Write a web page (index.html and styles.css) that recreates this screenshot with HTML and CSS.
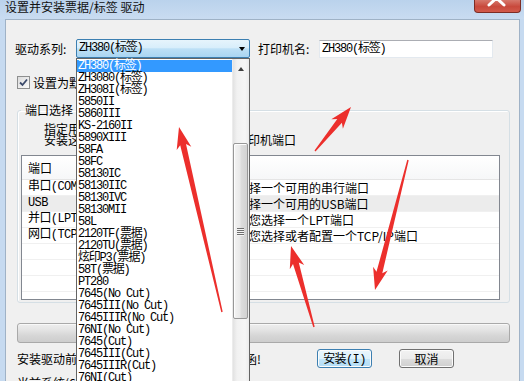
FILE: index.html
```html
<!DOCTYPE html>
<html lang="zh-CN">
<head>
<meta charset="UTF-8">
<meta name="viewport" content="width=device-width, initial-scale=1.0">
<title>设置并安装票据/标签 驱动</title>
<link rel="stylesheet" href="styles.css">
</head>
<body>

<div class="titlebar">
  <span class="title">设置并安装票据/标签 驱动</span>
  <span class="close-btn">
    <svg width="47" height="13" viewBox="0 0 47 13">
      <path d="M15 -8 L30 6 M30 -8 L15 6" stroke="#fff" stroke-width="3" stroke-linecap="round"/>
    </svg>
  </span>
</div>

<div class="client">
  <div class="row-top">
    <label class="lbl lbl-series">驱动系列:</label>
    <div class="combo">
      <span class="mono">ZH380(标签)</span>
      <span class="combo-arrow"></span>
    </div>
    <label class="lbl lbl-name">打印机名:</label>
    <div class="textbox mono">ZH380(标签)</div>
  </div>

  <div class="row-check">
    <span class="checkbox">
      <svg width="11" height="11" viewBox="0 0 11 11">
        <path d="M2 5.5 L4.5 8 L9 2.5" fill="none" stroke="#3b4a6b" stroke-width="1.8"/>
      </svg>
    </span>
    <span class="check-label">设置为默认打印机</span>
  </div>

  <fieldset class="port-group">
    <legend>端口选择</legend>
    <div class="desc">
      指定用于连接打印机的端口<br>
      安装这个驱动程序时请选择所连接的打印机端口
    </div>
    <div class="listview">
      <div class="lv-head"><span>端口</span><span>描述</span></div>
      <div class="lv-row"><span class="mono-mix">串口(COM)</span><span>请选择一个可用的串行端口</span></div>
      <div class="lv-row sel"><span class="mono-mix">USB</span><span>请选择一个可用的USB端口</span></div>
      <div class="lv-row"><span class="mono-mix">并口(LPT)</span><span>允许您选择一个LPT端口</span></div>
      <div class="lv-row"><span class="mono-mix">网口(TCP/IP)</span><span>允许您选择或者配置一个TCP/IP端口</span></div>
      <div class="lv-row"></div>
      <div class="lv-row"></div>
      <div class="lv-row"></div>
      <div class="lv-row"></div>
    </div>
  </fieldset>

  <div class="progress"></div>

  <div class="row-bottom">
    <div class="note">
      安装驱动前请确认打印机已连接并打开电源函!<br>
      当前系统(64位)
    </div>
    <button class="btn btn-default"><span class="mono-mix">安装(I)</span></button>
    <button class="btn btn-cancel">取消</button>
  </div>
</div>

<!-- opened combobox list -->
<div class="dropdown">
  <ul class="dd-list mono">
    <li class="active">ZH380(标签)</li>
    <li>ZH3080(标签)</li>
    <li>ZH308I(标签)</li>
    <li>5850II</li>
    <li>5860III</li>
    <li>KS-2160II</li>
    <li>5890XIII</li>
    <li>58FA</li>
    <li>58FC</li>
    <li>58130IC</li>
    <li>58130IIC</li>
    <li>58130IVC</li>
    <li>58130MII</li>
    <li>58L</li>
    <li>2120TF(票据)</li>
    <li>2120TU(票据)</li>
    <li>炫印P3(票据)</li>
    <li>58T(票据)</li>
    <li>PT280</li>
    <li>7645(No Cut)</li>
    <li>7645III(No Cut)</li>
    <li>7645IIIR(No Cut)</li>
    <li>76NI(No Cut)</li>
    <li>7645(Cut)</li>
    <li>7645III(Cut)</li>
    <li>7645IIIR(Cut)</li>
    <li>76NI(Cut)</li>
  </ul>
  <div class="dd-scroll">
    <div class="sb-up"><span class="sb-arrow"></span></div>
    <div class="sb-thumb">
      <span class="grip"></span>
      <span class="grip"></span>
      <span class="grip"></span>
      <span class="grip"></span>
    </div>
  </div>
</div>

<!-- red annotation arrows -->
<svg class="marks" width="524" height="381" viewBox="0 0 524 381">
  <g fill="#ec2f2c">
    <polygon points="222.7,311.8 186.0,143.9 191.3,146.7 179,127 176.7,150.1 180.2,145.2 221.3,312.2"/>
    <polygon points="315.5,151.4 341.9,122.8 342.9,128.8 351,107 331.3,119.3 337.3,119.0 314.5,150.6"/>
    <polygon points="407.3,159.8 376.5,271.8 373.1,266.8 375,290 387.7,270.5 382.3,273.3 408.7,160.2"/>
    <polygon points="314.7,326.8 298.8,262.5 304.2,265.1 291,246 289.8,269.2 293.0,264.1 313.3,327.2"/>
  </g>
</svg>

</body>
</html>
```

FILE: styles.css
```css
* {
  box-sizing: border-box;
}

body {
  margin: 0;
  width: 524px;
  height: 381px;
  overflow: hidden;
  position: relative;
  background: #c6daf0;
  font-family: "Noto Sans CJK SC", "Liberation Sans", sans-serif;
  font-size: 12px;
  color: #000;
}

.mono {
  font-family: "Liberation Mono", "Noto Sans CJK SC", monospace;
  letter-spacing: -1.2px;
}

.mono-mix {
  font-family: "Liberation Mono", "Noto Sans CJK SC", monospace;
  letter-spacing: -0.6px;
}

/* title bar */
.titlebar {
  height: 19px;
  display: flex;
  justify-content: space-between;
  align-items: flex-start;
  background: linear-gradient(#bad2ec, #c9dcf1);
}

.title {
  margin-left: 5px;
  line-height: 14px;
  color: #111;
}

.close-btn {
  width: 47px;
  height: 13px;
  margin-right: 3px;
  border: 1px solid #7d2c24;
  border-top: none;
  border-radius: 0 0 4px 4px;
  background: linear-gradient(#d6786c, #c8493c 55%, #d25a4b);
  overflow: hidden;
}

.close-btn svg {
  display: block;
  margin: -1px 0 0 -1px;
}

/* client area */
.client {
  margin: 0 4px 0 5px;
  height: 362px;
  border: 1px solid #9fb2c6;
  border-bottom: none;
  background: #f0f0f0;
}

.row-top {
  display: flex;
  align-items: center;
  height: 19px;
  margin-top: 19px;
  padding-left: 9px;
}

.lbl {
  line-height: 19px;
  white-space: nowrap;
}

.lbl-series {
  width: 61px;
}

.lbl-name {
  width: 61px;
  margin-left: 8px;
}

.combo {
  width: 174px;
  height: 19px;
  display: flex;
  align-items: center;
  padding-left: 2px;
  border: 1px solid #3c7fb1;
  border-radius: 2px;
  background: linear-gradient(#e6f4fc, #d8eefb 45%, #bde0f6 52%, #a9d5f2);
  line-height: 17px;
}

.combo-arrow {
  margin-left: auto;
  margin-right: 4px;
  width: 0;
  height: 0;
  border-left: 3.5px solid transparent;
  border-right: 3.5px solid transparent;
  border-top: 4px solid #000;
}

.textbox {
  width: 174px;
  height: 18px;
  padding-left: 2px;
  line-height: 16px;
  background: #fff;
  border: 1px solid #e3e9ef;
  border-top-color: #abadb3;
}

.row-check {
  display: flex;
  align-items: center;
  height: 13px;
  margin-top: 18px;
  padding-left: 11px;
}

.checkbox {
  width: 13px;
  height: 13px;
  border: 1px solid #8e8f8f;
  background: linear-gradient(135deg, #dcdcdc, #fbfbfb);
  display: flex;
  align-items: center;
  justify-content: center;
}

.check-label {
  margin-left: 3px;
  line-height: 13px;
}

/* port group */
.port-group {
  margin: 14px 9px 0 11px;
  padding: 6px 9px 2px 3px;
  min-width: 0;
  border: 1px solid #d5dfe5;
  border-radius: 3px;
  box-shadow: inset 1px 1px 0 #fff;
}

.port-group legend {
  padding: 0 4px;
  line-height: 14px;
}

.desc {
  margin-left: 23px;
  line-height: 11px;
  white-space: nowrap;
}

.listview {
  height: 145px;
  margin-top: 10px;
  border: 1px solid #828790;
  background: #fff;
  overflow: hidden;
}

.lv-head {
  display: grid;
  grid-template-columns: 197px 1fr;
  height: 24px;
  padding-left: 6px;
  line-height: 23px;
  border-bottom: 1px solid #e5e5e5;
  background: linear-gradient(#ffffff, #f6f7f8);
}

.lv-row {
  display: grid;
  grid-template-columns: 197px 1fr;
  height: 16px;
  padding-left: 6px;
  line-height: 15px;
  border-bottom: 1px solid #f0f0f0;
  white-space: nowrap;
}

.lv-row.sel {
  background: #ececec;
}

/* progress bar */
.progress {
  height: 20px;
  margin: 20px 9px 0 11px;
  border: 1px solid #a9a9a9;
  border-radius: 3px;
  background: linear-gradient(#eeeeee, #e3e3e3 35%, #d6d6d6 65%, #cdcdcd);
  box-shadow: inset 0 1px 0 #f8f8f8;
}

/* bottom row */
.row-bottom {
  display: flex;
  align-items: flex-start;
  margin-top: 4px;
  padding-left: 11px;
}

.note {
  width: 300px;
  line-height: 24px;
  white-space: nowrap;
  overflow: hidden;
}

.btn {
  width: 55px;
  height: 19px;
  margin-top: 2px;
  padding: 0;
  font-family: "Noto Sans CJK SC", sans-serif;
  font-size: 12px;
  line-height: 16px;
  color: #000;
  border: 1px solid #707070;
  border-radius: 3px;
  background: linear-gradient(#f2f2f2, #ebebeb 50%, #dddddd 51%, #cfcfcf);
  box-shadow: inset 0 0 0 1px #fbfbfb;
}

.btn-default {
  border-color: #3c7fb1;
  background: linear-gradient(#eaf6fd, #dcf1fc 50%, #c4e6f9 51%, #b1dcf5);
}

.btn-cancel {
  margin-left: 27px;
}

/* dropdown popup of the combobox */
.dropdown {
  position: absolute;
  left: 76px;
  top: 58px;
  width: 174px;
  height: 340px;
  display: flex;
  border: 1px solid #646464;
  background: #fff;
}

.dd-list {
  flex: 1;
  margin: 0;
  padding: 1px 0 0 0;
  list-style: none;
  font-size: 12px;
}

.dd-list li {
  height: 12px;
  line-height: 12px;
  padding-left: 1px;
  white-space: nowrap;
}

.dd-list li.active {
  background: #3399ff;
  color: #fff;
}

.dd-scroll {
  width: 17px;
  background: linear-gradient(90deg, #e2e2e2, #f1f1f1 25%, #f6f6f6 75%, #ececec);
  border-left: 1px solid #ececec;
}

.sb-up {
  height: 17px;
  display: flex;
  align-items: center;
  justify-content: center;
}

.sb-arrow {
  width: 0;
  height: 0;
  border-left: 3.5px solid transparent;
  border-right: 3.5px solid transparent;
  border-bottom: 4px solid #404040;
  margin-top: 2px;
}

.sb-thumb {
  height: 176px;
  margin: 67px 1px 0 0;
  border: 1px solid #979797;
  border-radius: 2px;
  background: linear-gradient(90deg, #f4f4f4, #e9e9e9 45%, #dcdcdc 55%, #d2d2d2);
  box-shadow: inset 1px 1px 0 #fdfdfd;
  display: flex;
  flex-direction: column;
  align-items: center;
  justify-content: center;
  gap: 1px;
}

.grip {
  width: 7px;
  height: 1px;
  background: #6e6e6e;
  box-shadow: 0 1px 0 #f5f5f5;
}

/* annotation overlay */
.marks {
  position: absolute;
  left: 0;
  top: 0;
  pointer-events: none;
}
```
